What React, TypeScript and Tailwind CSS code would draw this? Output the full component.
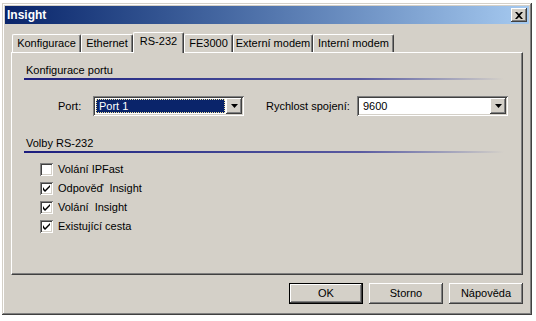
import React from "react";

const raised =
  "shadow-[inset_-1px_-1px_#404040,inset_1px_1px_#ffffff,inset_-2px_-2px_#808080,inset_2px_2px_#d4d0c8]";
const sunken =
  "shadow-[inset_1px_1px_#808080,inset_-1px_-1px_#ffffff,inset_2px_2px_#404040,inset_-2px_-2px_#d4d0c8]";

function Arrow() {
  return (
    <div className={`w-[16px] h-[16px] bg-[#d4d0c8] ${raised} flex items-center justify-center shrink-0`}>
      <svg width="7" height="4" viewBox="0 0 7 4">
        <path d="M0 0h7L3.5 4z" fill="#000" />
      </svg>
    </div>
  );
}

function Combo({ value, selected }: { value: string; selected?: boolean }) {
  return (
    <div className={`w-[151px] h-[20px] bg-white ${sunken} p-[2px] flex items-center`}>
      <div className="flex-1 h-full flex items-center pl-[1px] pr-[1px]">
        {selected ? (
          <div className="w-full h-[14px] bg-[#0a246a] text-white border border-dotted border-[#f0e0a0] flex items-center pl-[2px] leading-none">
            {value}
          </div>
        ) : (
          <div className="w-full h-[14px] flex items-center pl-[3px] leading-none">{value}</div>
        )}
      </div>
      <Arrow />
    </div>
  );
}

function Check({ checked, label }: { checked: boolean; label: string }) {
  return (
    <div className="h-[19px] flex items-center">
      <div className={`w-[13px] h-[13px] bg-white ${sunken} flex items-center justify-center`}>
        {checked && (
          <svg width="7" height="7" viewBox="0 0 7 7">
            <path d="M0 2v3l2 2 5-5V-0L2 5z" fill="#000" />
          </svg>
        )}
      </div>
      <span className="ml-[5px] leading-none whitespace-pre">{label}</span>
    </div>
  );
}

function GroupHeader({ title }: { title: string }) {
  return (
    <div>
      <div className="pl-[2px] h-[13px] leading-[13px]">{title}</div>
      <div className="mt-[1px] w-[480px] h-[2px] bg-linear-to-r from-[#1c1c7e] via-[#5a5aa0] via-70% to-[#d4d0c8]" />
    </div>
  );
}

function Button({ label, def }: { label: string; def?: boolean }) {
  return (
    <div
      className={`w-[74px] h-[21px] bg-[#d4d0c8] flex items-center justify-center leading-none ${
        def
          ? "border border-black shadow-[inset_-1px_-1px_#404040,inset_1px_1px_#ffffff,inset_-2px_-2px_#808080]"
          : raised
      }`}
    >
      {label}
    </div>
  );
}

const tabs = [
  { label: "Konfigurace", w: 69 },
  { label: "Ethernet", w: 52 },
  { label: "RS-232", w: 51, sel: true },
  { label: "FE3000", w: 49 },
  { label: "Externí modem", w: 80 },
  { label: "Interní modem", w: 81 },
];

export default function App() {
  return (
    <div className="w-[536px] h-[321px] bg-white overflow-hidden pt-[3px] pl-[2px] font-['Liberation_Sans',Arial,sans-serif] text-[11px] text-black">
      <div
        className={`w-[530px] h-[312px] bg-[#d4d0c8] p-[3px] flex flex-col shadow-[inset_-1px_-1px_#404040,inset_1px_1px_#d4d0c8,inset_-2px_-2px_#808080,inset_2px_2px_#ffffff]`}
      >
        {/* Title bar */}
        <div className="h-[18px] bg-linear-to-r from-[#0a246a] to-[#a6caf0] flex items-center justify-between pl-[2px] pr-[2px]">
          <span className="text-white font-bold text-[12px] leading-none">Insight</span>
          <div className={`w-[16px] h-[14px] bg-[#d4d0c8] ${raised} flex items-center justify-center`}>
            <svg width="8" height="7" viewBox="0 0 8 7">
              <path d="M0 0h2l2 2 2-2h2L5 3.5 8 7H6L4 5 2 7H0l3-3.5z" fill="#000" />
            </svg>
          </div>
        </div>

        {/* Tabs */}
        <div className="mt-[8px] ml-[7px] h-[20px] flex items-end relative z-10">
          {tabs.map((t) =>
            t.sel ? (
              <div
                key={t.label}
                style={{ width: t.w }}
                className="h-[21px] -mb-[1px] bg-[#d4d0c8] border-l border-t border-white border-r border-r-[#404040] rounded-t-[2px] shadow-[inset_-1px_0_#808080] flex items-start justify-center pt-[3px] leading-none"
              >
                {t.label}
              </div>
            ) : (
              <div
                key={t.label}
                style={{ width: t.w }}
                className="h-[18px] bg-[#d4d0c8] border-l border-t border-white border-r border-r-[#404040] rounded-t-[2px] shadow-[inset_-1px_0_#808080] flex items-center justify-center leading-none"
              >
                {t.label}
              </div>
            )
          )}
        </div>

        {/* Panel */}
        <div className="ml-[6px] w-[512px] h-[223px] border-l border-t border-white border-r border-b border-r-[#404040] border-b-[#404040] shadow-[inset_-1px_-1px_#808080] pl-[12px] pt-[11px]">
          <GroupHeader title="Konfigurace portu" />
          <div className="mt-[16px] h-[20px] flex items-center">
            <div className="ml-[34px] w-[35px] leading-none">Port:</div>
            <Combo value="Port 1" selected />
            <div className="ml-[22px] w-[91px] leading-none">Rychlost spojení:</div>
            <Combo value="9600" />
          </div>
          <div className="mt-[21px]">
            <GroupHeader title="Volby RS-232" />
          </div>
          <div className="mt-[7px] pl-[16px] flex flex-col">
            <Check checked={false} label="Volání IPFast" />
            <Check checked label="Odpověď  Insight" />
            <Check checked label="Volání  Insight" />
            <Check checked label="Existující cesta" />
          </div>
        </div>

        {/* Buttons */}
        <div className="mt-[8px] flex justify-end gap-[6px] pr-[6px]">
          <Button label="OK" def />
          <Button label="Storno" />
          <Button label="Nápověda" />
        </div>
      </div>
    </div>
  );
}
